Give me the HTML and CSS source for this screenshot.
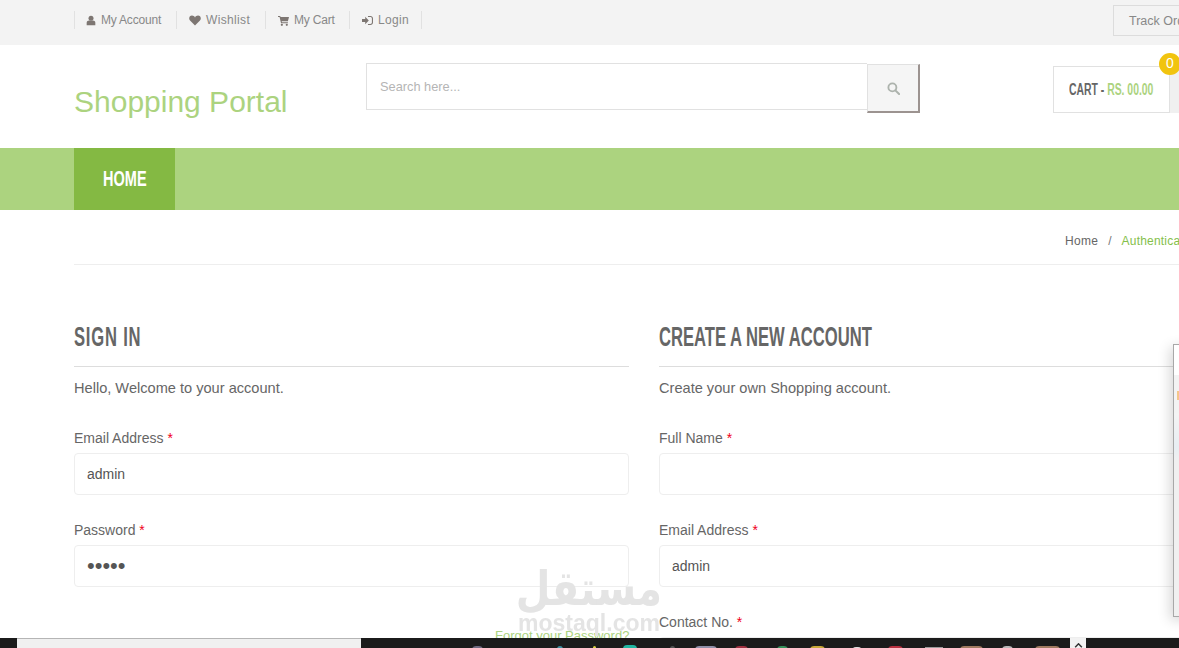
FILE: index.html
```html
<!DOCTYPE html>
<html lang="en">
<head>
<meta charset="utf-8">
<title>Shopping Portal</title>
<link rel="stylesheet" href="styles.css">
</head>
<body>
<div class="page">
  <div class="topbar">
    <div class="wrap topbar-in">
      <ul class="toplinks">
        <li class="tl-account"><svg class="ic" viewBox="0 0 12 12"><circle cx="6" cy="3.200" r="3"/><path d="M.8 11.800V8.600C.8 6.800 2.400 6 3.600 6h4.800c1.200 0 2.800.8 2.800 2.600v3.200z"/></svg>My Account</li>
        <li class="tl-wish"><svg class="ic ic-w" viewBox="0 0 14 12"><path d="M7 11.800 1.200 6C-.8 3.700.5.300 3.500.300 5 .300 6.300 1.200 7 2.400 7.700 1.200 9 .300 10.500.300c3 0 4.300 3.400 2.300 5.700z"/></svg>Wishlist</li>
        <li class="tl-cart"><svg class="ic ic-c" viewBox="0 0 12 12"><path d="M0 1h2.400l.4 1.200H12l-1.200 4.600H4l.3 1.200h6.500v1.100H3.300L1.700 2.100H0z"/><circle cx="4.200" cy="10.700" r="1.200"/><circle cx="9.600" cy="10.700" r="1.200"/></svg>My Cart</li>
        <li class="tl-login"><svg class="ic ic-c" viewBox="0 0 12 12"><path d="M0 4.300h3.500V2L7.400 6 3.500 10V7.700H0z"/><path d="M6.500 1h2.700C10.800 1 12 2.200 12 3.800v4.400C12 9.800 10.800 11 9.200 11H6.500V9.800h2.700c.9 0 1.600-.7 1.600-1.600V3.800c0-.9-.7-1.600-1.600-1.600H6.500z"/></svg>Login</li>
      </ul>
      <a class="track">Track Order</a>
    </div>
  </div>

  <header class="wrap header">
    <div class="logo">Shopping Portal</div>
    <form class="search">
      <div class="search-field">Search here...</div>
      <div class="search-btn"><svg viewBox="0 0 14 14" width="13" height="13"><circle cx="5.800" cy="5.800" r="4.300" fill="none" stroke="#adb3ad" stroke-width="2"/><path d="M9 9l4 4" stroke="#adb3ad" stroke-width="2.200" stroke-linecap="round"/></svg></div>
    </form>
    <div class="cart">
      <div class="cart-box"><span class="cart-text">CART - <span class="cart-price">RS. 00.00</span></span></div>
      <div class="cart-side"></div>
      <span class="cart-badge">0</span>
    </div>
  </header>

  <nav class="nav">
    <div class="wrap"><a class="nav-home"><span class="nav-label">HOME</span></a></div>
  </nav>

  <div class="wrap crumbs">
    <div class="crumbs-in">
      <span class="crumb">Home</span><span class="crumb-sep">/</span><span class="crumb-now">Authentication</span>
    </div>
  </div>

  <main class="wrap columns">
    <section>
      <h2><span class="h-text h-short">SIGN IN</span></h2>
      <p class="lead">Hello, Welcome to your account.</p>
      <div class="field"><label>Email Address <i>*</i></label><div class="input">admin</div></div>
      <div class="field"><label>Password <i>*</i></label><div class="input input-pw">•••••</div></div>
      <div class="forgot">Forgot your Password?</div>
    </section>
    <section>
      <h2><span class="h-text">CREATE A NEW ACCOUNT</span></h2>
      <p class="lead">Create your own Shopping account.</p>
      <div class="field"><label>Full Name <i>*</i></label><div class="input"></div></div>
      <div class="field"><label>Email Address <i>*</i></label><div class="input">admin</div></div>
      <div class="field"><label>Contact No. <i>*</i></label><div class="input"></div></div>
    </section>
  </main>
</div>

<div class="popup">
  <div class="popup-head"></div>
  <div class="popup-band"><span class="popup-dot"></span></div>
  <div class="popup-tint"></div>
</div>

<div class="watermark">
  <div class="wm-ar">مستقل</div>
  <div class="wm-en">mostaql.com</div>
</div>

<div class="taskbar">
  <div class="tb-start"></div>
  <div class="tb-search"></div>
  <div class="tb-icons">
    <span class="t t1"></span><span class="t t2"></span><span class="t t3"></span><span class="t t4"></span>
    <span class="t t5"></span><span class="t t6"></span><span class="t t7"></span><span class="t t8"></span>
    <span class="t t9"></span><span class="t t10"></span><span class="t t11"></span><span class="t t12"></span>
    <span class="t t13"></span><span class="t t14"></span><span class="t t15"></span>
  </div>
  <div class="tb-tray"><svg viewBox="0 0 10 6" width="9" height="5"><path d="M1 5l4-4 4 4" fill="none" stroke="#333" stroke-width="1.800"/></svg></div>
</div>
</body>
</html>
```
FILE: styles.css
```css
* { box-sizing: border-box; }
html, body { margin: 0; height: 100%; overflow: hidden; background: #fff; }
body { font-family: "Liberation Sans", Arial, sans-serif; color: #666; font-size: 14px; }
.page { width: 1300px; }
.wrap { width: 1170px; margin-left: 59px; padding: 0 15px; }

.topbar { height: 45px; background: #f3f3f3; }
.topbar-in { display: flex; justify-content: space-between; align-items: flex-start; }
.toplinks { list-style: none; margin: 11px 0 0; padding: 0; display: flex; border-left: 1px solid #e1e1e1; }
.toplinks li { height: 18px; padding: 0 14px 0 12px; border-right: 1px solid #e1e1e1; display: flex; align-items: center; font-size: 12px; color: #888; white-space: nowrap; }
.toplinks .tl-account { width: 102px; padding-left: 11px; letter-spacing: -.2px; }
.tl-wish { width: 89px; letter-spacing: .35px; }
.tl-cart { width: 84px; letter-spacing: -.2px; }
.tl-login { width: 72px; letter-spacing: .3px; }
.ic { width: 10px; height: 11px; fill: #7d7672; margin-right: 5px; flex: none; }
.ic-w { width: 12px; }
.ic-c { width: 11px; }
.track { margin: 5px -15px 0 0; height: 31px; width: 116px; border: 1px solid #dcdcdc; padding-left: 15px; line-height: 31px; font-size: 12.500px; color: #888; white-space: nowrap; }

.header { display: flex; height: 103px; position: relative; }
.logo { width: 292px; margin-top: 39px; font-size: 30px; line-height: 36px; color: #acd37f; white-space: nowrap; }
.search { display: flex; align-items: flex-start; margin-top: 18px; width: 554px; }
.search-field { width: 501px; height: 47px; border: 1px solid #e1e1e1; border-right: 0; padding-left: 13px; line-height: 45px; font-size: 12.800px; color: #b5b5b5; }
.search-btn { width: 53px; height: 49px; margin-top: 1px; background: #f5f5f5; border-left: 1px solid #e1e1e1; border-top: 1px solid #e1e1e1; border-right: 2px solid #9c9390; border-bottom: 2px solid #9c9390; display: flex; align-items: center; justify-content: center; }
.cart { display: flex; margin: 21px 0 0 133px; position: relative; height: 47px; }
.cart-box { width: 117px; height: 47px; border: 1px solid #e1e1e1; padding-left: 15px; line-height: 45px; white-space: nowrap; }
.cart-text { display: inline-block; font-weight: 700; font-size: 16px; color: #666; transform: scaleX(.65); transform-origin: left center; }
.cart-price { color: #acd37f; }
.cart-side { width: 40px; background: #f0f0f0; }
.cart-badge { position: absolute; left: 106px; top: -13px; width: 22px; height: 22px; border-radius: 50%; background: #f1c40f; color: #fff; font-size: 14px; line-height: 21px; text-align: center; }

.nav { height: 62px; background: #acd37f; }
.nav-home { display: block; width: 101px; height: 62px; padding-left: 29px; background: #84b943; white-space: nowrap; }
.nav-label { display: inline-block; color: #fff; font-weight: 700; font-size: 22px; line-height: 62px; transform: scaleX(.66); transform-origin: left center; }

.crumbs-in { height: 55px; border-bottom: 1px solid #eee; padding: 24px 0 0 991px; font-size: 12px; line-height: 14px; white-space: nowrap; }
.crumb { color: #666; letter-spacing: .3px; }
.crumb-sep { margin: 0 10px; color: #777; }
.crumb-now { color: #84c04a; letter-spacing: .2px; }

.columns { display: grid; grid-template-columns: 555px 555px; column-gap: 30px; padding-top: 53px; }
h2 { margin: 0; height: 49px; padding-top: 3px; font-weight: 700; font-size: 27px; line-height: 32px; color: #666; border-bottom: 1px solid #ddd; white-space: nowrap; }
.h-text { display: inline-block; transform: scaleX(.615); transform-origin: left center; }
.h-short { letter-spacing: 1.300px; }
.lead { margin: 12px 0 0; font-size: 14.600px; line-height: 18px; color: #666; }
.field { margin-top: 33px; }
label { display: block; font-size: 14px; line-height: 16px; margin-bottom: 7px; color: #666; }
label i { font-style: normal; color: #f00020; }
.field + .field { margin-top: 27px; }
.input { height: 42px; border: 1px solid #eee; border-radius: 4px; padding-left: 12px; line-height: 40px; font-size: 14px; color: #555; }
.input-pw { font-size: 22px; color: #555; }
.forgot { margin-top: 42px; margin-left: 421px; font-size: 13px; line-height: 14px; color: #acd37f; white-space: nowrap; }

.popup { position: fixed; left: 1173px; top: 344px; width: 40px; height: 273px; background: #f0f0f0; border: 1px solid #a8a8a8; box-shadow: -3px 3px 12px rgba(0,0,0,.16); }
.popup-head { height: 30px; background: #fff; }
.popup-band { height: 38px; background: #f3f3f3; position: relative; }
.popup-dot { position: absolute; left: 3px; top: 16px; width: 5px; height: 9px; background: #f5c68a; }
.popup-tint { height: 48px; margin-top: 0; background: linear-gradient(#f4f4f4, #e8eef2 70%, #f0f0f0); }

.watermark { position: fixed; left: 500px; top: 563px; width: 178px; text-align: center; color: #e4e4e4; pointer-events: none; }
.wm-ar { font-family: "DejaVu Sans", sans-serif; font-weight: 700; font-size: 40px; line-height: 50px; white-space: nowrap; transform: scaleY(1.200); }
.wm-en { font-weight: 700; font-size: 23px; line-height: 20px; white-space: nowrap; }

.taskbar { position: fixed; left: 0; right: 0; bottom: 0; height: 10px; background: #1b1b1b; display: flex; overflow: hidden; }
.tb-start { width: 17px; }
.tb-search { width: 344px; background: #f0f0f0; border-top: 1px solid #b5b5b5; }
.tb-icons { width: 709px; position: relative; }
.t { position: absolute; top: 8px; height: 4px; border-radius: 6px 6px 0 0; background: #888; }
.t1 { left: 111px; width: 11px; background: #6f6a80; }
.t2 { left: 196px; width: 6px; background: #3d8fa0; }
.t3 { left: 232px; width: 3px; background: #d8d040; }
.t4 { left: 262px; width: 14px; top: 7px; background: #1fb5a0; }
.t5 { left: 309px; width: 5px; background: #555; }
.t6 { left: 334px; width: 22px; background: #8f8fa8; }
.t7 { left: 374px; width: 13px; background: #a03040; }
.t8 { left: 416px; width: 11px; background: #35905a; }
.t9 { left: 449px; width: 15px; background: #c8a838; }
.t10 { left: 491px; width: 10px; top: 9px; background: #ddd; }
.t11 { left: 527px; width: 15px; background: #b83040; }
.t12 { left: 564px; width: 18px; top: 9px; border-radius: 0; background: #9a9a9a; }
.t13 { left: 599px; width: 23px; background: #a07a60; }
.t14 { left: 641px; width: 11px; background: #b8b8b8; }
.t15 { left: 674px; width: 25px; background: #a07a60; }
.tb-tray { width: 16px; background: #f2f2f2; display: flex; justify-content: center; padding-top: 5px; }
```
